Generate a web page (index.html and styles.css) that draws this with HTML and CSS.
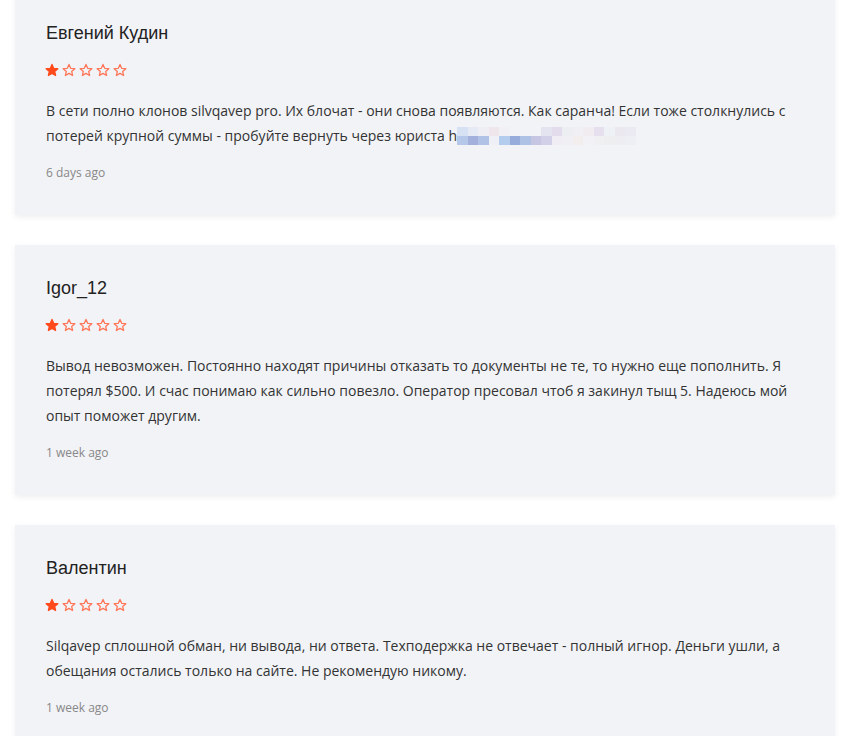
FILE: index.html
```html
<!DOCTYPE html>
<html lang="ru">
<head>
<meta charset="utf-8">
<link rel="stylesheet" href="styles.css">
</head>
<body>
<div class="reviews">
  <div class="card">
    <div class="name">Евгений Кудин</div>
    <div class="stars">
      <svg class="star on" viewBox="0 0 24 24"><path d="M12 2.5l2.9 6.6 7.1.6-5.4 4.7 1.6 7-6.2-3.7-6.2 3.7 1.6-7L2 9.7l7.1-.6z"/></svg>
      <svg class="star" viewBox="0 0 24 24"><path d="M12 2.5l2.9 6.6 7.1.6-5.4 4.7 1.6 7-6.2-3.7-6.2 3.7 1.6-7L2 9.7l7.1-.6z"/></svg>
      <svg class="star" viewBox="0 0 24 24"><path d="M12 2.5l2.9 6.6 7.1.6-5.4 4.7 1.6 7-6.2-3.7-6.2 3.7 1.6-7L2 9.7l7.1-.6z"/></svg>
      <svg class="star" viewBox="0 0 24 24"><path d="M12 2.5l2.9 6.6 7.1.6-5.4 4.7 1.6 7-6.2-3.7-6.2 3.7 1.6-7L2 9.7l7.1-.6z"/></svg>
      <svg class="star" viewBox="0 0 24 24"><path d="M12 2.5l2.9 6.6 7.1.6-5.4 4.7 1.6 7-6.2-3.7-6.2 3.7 1.6-7L2 9.7l7.1-.6z"/></svg>
    </div>
    <p class="text">В сети полно клонов silvqavep pro. Их блочат - они снова появляются. Как саранча! Если тоже столкнулись с потерей крупной суммы - пробуйте вернуть через юриста h<span class="blur"><span class="row"><i style="background:#d6e2f4"></i><i style="background:#e6eaf4"></i><i style="background:#eeeef4"></i><i style="background:#efe6ec"></i><i style="background:#f0f0f5"></i><i style="background:#f2f3f7"></i><i style="background:#f2f3f7"></i><i style="background:#f2f3f7"></i><i style="background:#e4e4f0"></i><i style="background:#e2dced"></i><i style="background:#eceef2"></i><i style="background:#f0f0f4"></i><i style="background:#f0ecf0"></i><i style="background:#e6e0ee"></i><i style="background:#eef2f6"></i><i style="background:#ece8f0"></i><i style="background:#ebeaf2"></i></span><span class="row"><i style="background:#b6c8ea"></i><i style="background:#a4b0dc"></i><i style="background:#b0c2e6"></i><i style="background:#eef0f6"></i><i style="background:#b4cced"></i><i style="background:#98acdc"></i><i style="background:#aec2e6"></i><i style="background:#c6c6e2"></i><i style="background:#d2d0e8"></i><i style="background:#f0eef4"></i><i style="background:#f0f0f4"></i><i style="background:#f2eeee"></i><i style="background:#f2f2f6"></i><i style="background:#f0f0f2"></i><i style="background:#eeeef0"></i><i style="background:#eeeef2"></i><i style="background:#eeeff4"></i></span></span></p>
    <div class="date">6 days ago</div>
  </div>

  <div class="card">
    <div class="name">Igor_12</div>
    <div class="stars">
      <svg class="star on" viewBox="0 0 24 24"><path d="M12 2.5l2.9 6.6 7.1.6-5.4 4.7 1.6 7-6.2-3.7-6.2 3.7 1.6-7L2 9.7l7.1-.6z"/></svg>
      <svg class="star" viewBox="0 0 24 24"><path d="M12 2.5l2.9 6.6 7.1.6-5.4 4.7 1.6 7-6.2-3.7-6.2 3.7 1.6-7L2 9.7l7.1-.6z"/></svg>
      <svg class="star" viewBox="0 0 24 24"><path d="M12 2.5l2.9 6.6 7.1.6-5.4 4.7 1.6 7-6.2-3.7-6.2 3.7 1.6-7L2 9.7l7.1-.6z"/></svg>
      <svg class="star" viewBox="0 0 24 24"><path d="M12 2.5l2.9 6.6 7.1.6-5.4 4.7 1.6 7-6.2-3.7-6.2 3.7 1.6-7L2 9.7l7.1-.6z"/></svg>
      <svg class="star" viewBox="0 0 24 24"><path d="M12 2.5l2.9 6.6 7.1.6-5.4 4.7 1.6 7-6.2-3.7-6.2 3.7 1.6-7L2 9.7l7.1-.6z"/></svg>
    </div>
    <p class="text">Вывод невозможен. Постоянно находят причины отказать то документы не те, то нужно еще пополнить. Я потерял $500. И счас понимаю как сильно повезло. Оператор пресовал чтоб я закинул тыщ 5. Надеюсь мой опыт поможет другим.</p>
    <div class="date">1 week ago</div>
  </div>

  <div class="card">
    <div class="name">Валентин</div>
    <div class="stars">
      <svg class="star on" viewBox="0 0 24 24"><path d="M12 2.5l2.9 6.6 7.1.6-5.4 4.7 1.6 7-6.2-3.7-6.2 3.7 1.6-7L2 9.7l7.1-.6z"/></svg>
      <svg class="star" viewBox="0 0 24 24"><path d="M12 2.5l2.9 6.6 7.1.6-5.4 4.7 1.6 7-6.2-3.7-6.2 3.7 1.6-7L2 9.7l7.1-.6z"/></svg>
      <svg class="star" viewBox="0 0 24 24"><path d="M12 2.5l2.9 6.6 7.1.6-5.4 4.7 1.6 7-6.2-3.7-6.2 3.7 1.6-7L2 9.7l7.1-.6z"/></svg>
      <svg class="star" viewBox="0 0 24 24"><path d="M12 2.5l2.9 6.6 7.1.6-5.4 4.7 1.6 7-6.2-3.7-6.2 3.7 1.6-7L2 9.7l7.1-.6z"/></svg>
      <svg class="star" viewBox="0 0 24 24"><path d="M12 2.5l2.9 6.6 7.1.6-5.4 4.7 1.6 7-6.2-3.7-6.2 3.7 1.6-7L2 9.7l7.1-.6z"/></svg>
    </div>
    <p class="text">Silqavep сплошной обман, ни вывода, ни ответа. Техподержка не отвечает - полный игнор. Деньги ушли, а обещания остались только на сайте. Не рекомендую никому.</p>
    <div class="date">1 week ago</div>
  </div>
</div>
</body>
</html>
```

FILE: styles.css
```css
html, body {
  margin: 0;
  padding: 0;
  background: #ffffff;
}

.reviews {
  display: flex;
  flex-direction: column;
  gap: 30px;
  margin-top: -10px;
  padding: 0 8px 0 15px;
}

.card {
  background: #f2f3f7;
  box-shadow: 0 2px 6px rgba(0, 0, 0, 0.07);
  padding: 31px 31px 33px 31px;
}

.name {
  font-family: "Liberation Sans", Arial, sans-serif;
  font-size: 18px;
  line-height: 24px;
  color: #222;
}

.stars {
  display: flex;
  gap: 3px;
  margin-top: 18px;
  margin-left: -1px;
  height: 14px;
}

.star {
  width: 14px;
  height: 14px;
  fill: none;
  stroke: #ff7658;
  stroke-width: 2.2;
  stroke-linejoin: round;
}

.star.on {
  fill: #ff4a1c;
  stroke: #ff4a1c;
}

.text {
  font-family: "Open Sans", sans-serif;
  font-size: 14px;
  line-height: 25px;
  color: #333;
  margin: 21px 0 0 0;
}

.blur {
  display: inline-block;
  line-height: 0;
  vertical-align: middle;
  margin-top: -3px;
}

.blur .row {
  display: flex;
}

.blur i {
  display: block;
  width: 10.5px;
  height: 9px;
}

.date {
  font-family: "Open Sans", sans-serif;
  font-size: 12px;
  line-height: 18px;
  color: #888;
  margin-top: 16px;
}
```
